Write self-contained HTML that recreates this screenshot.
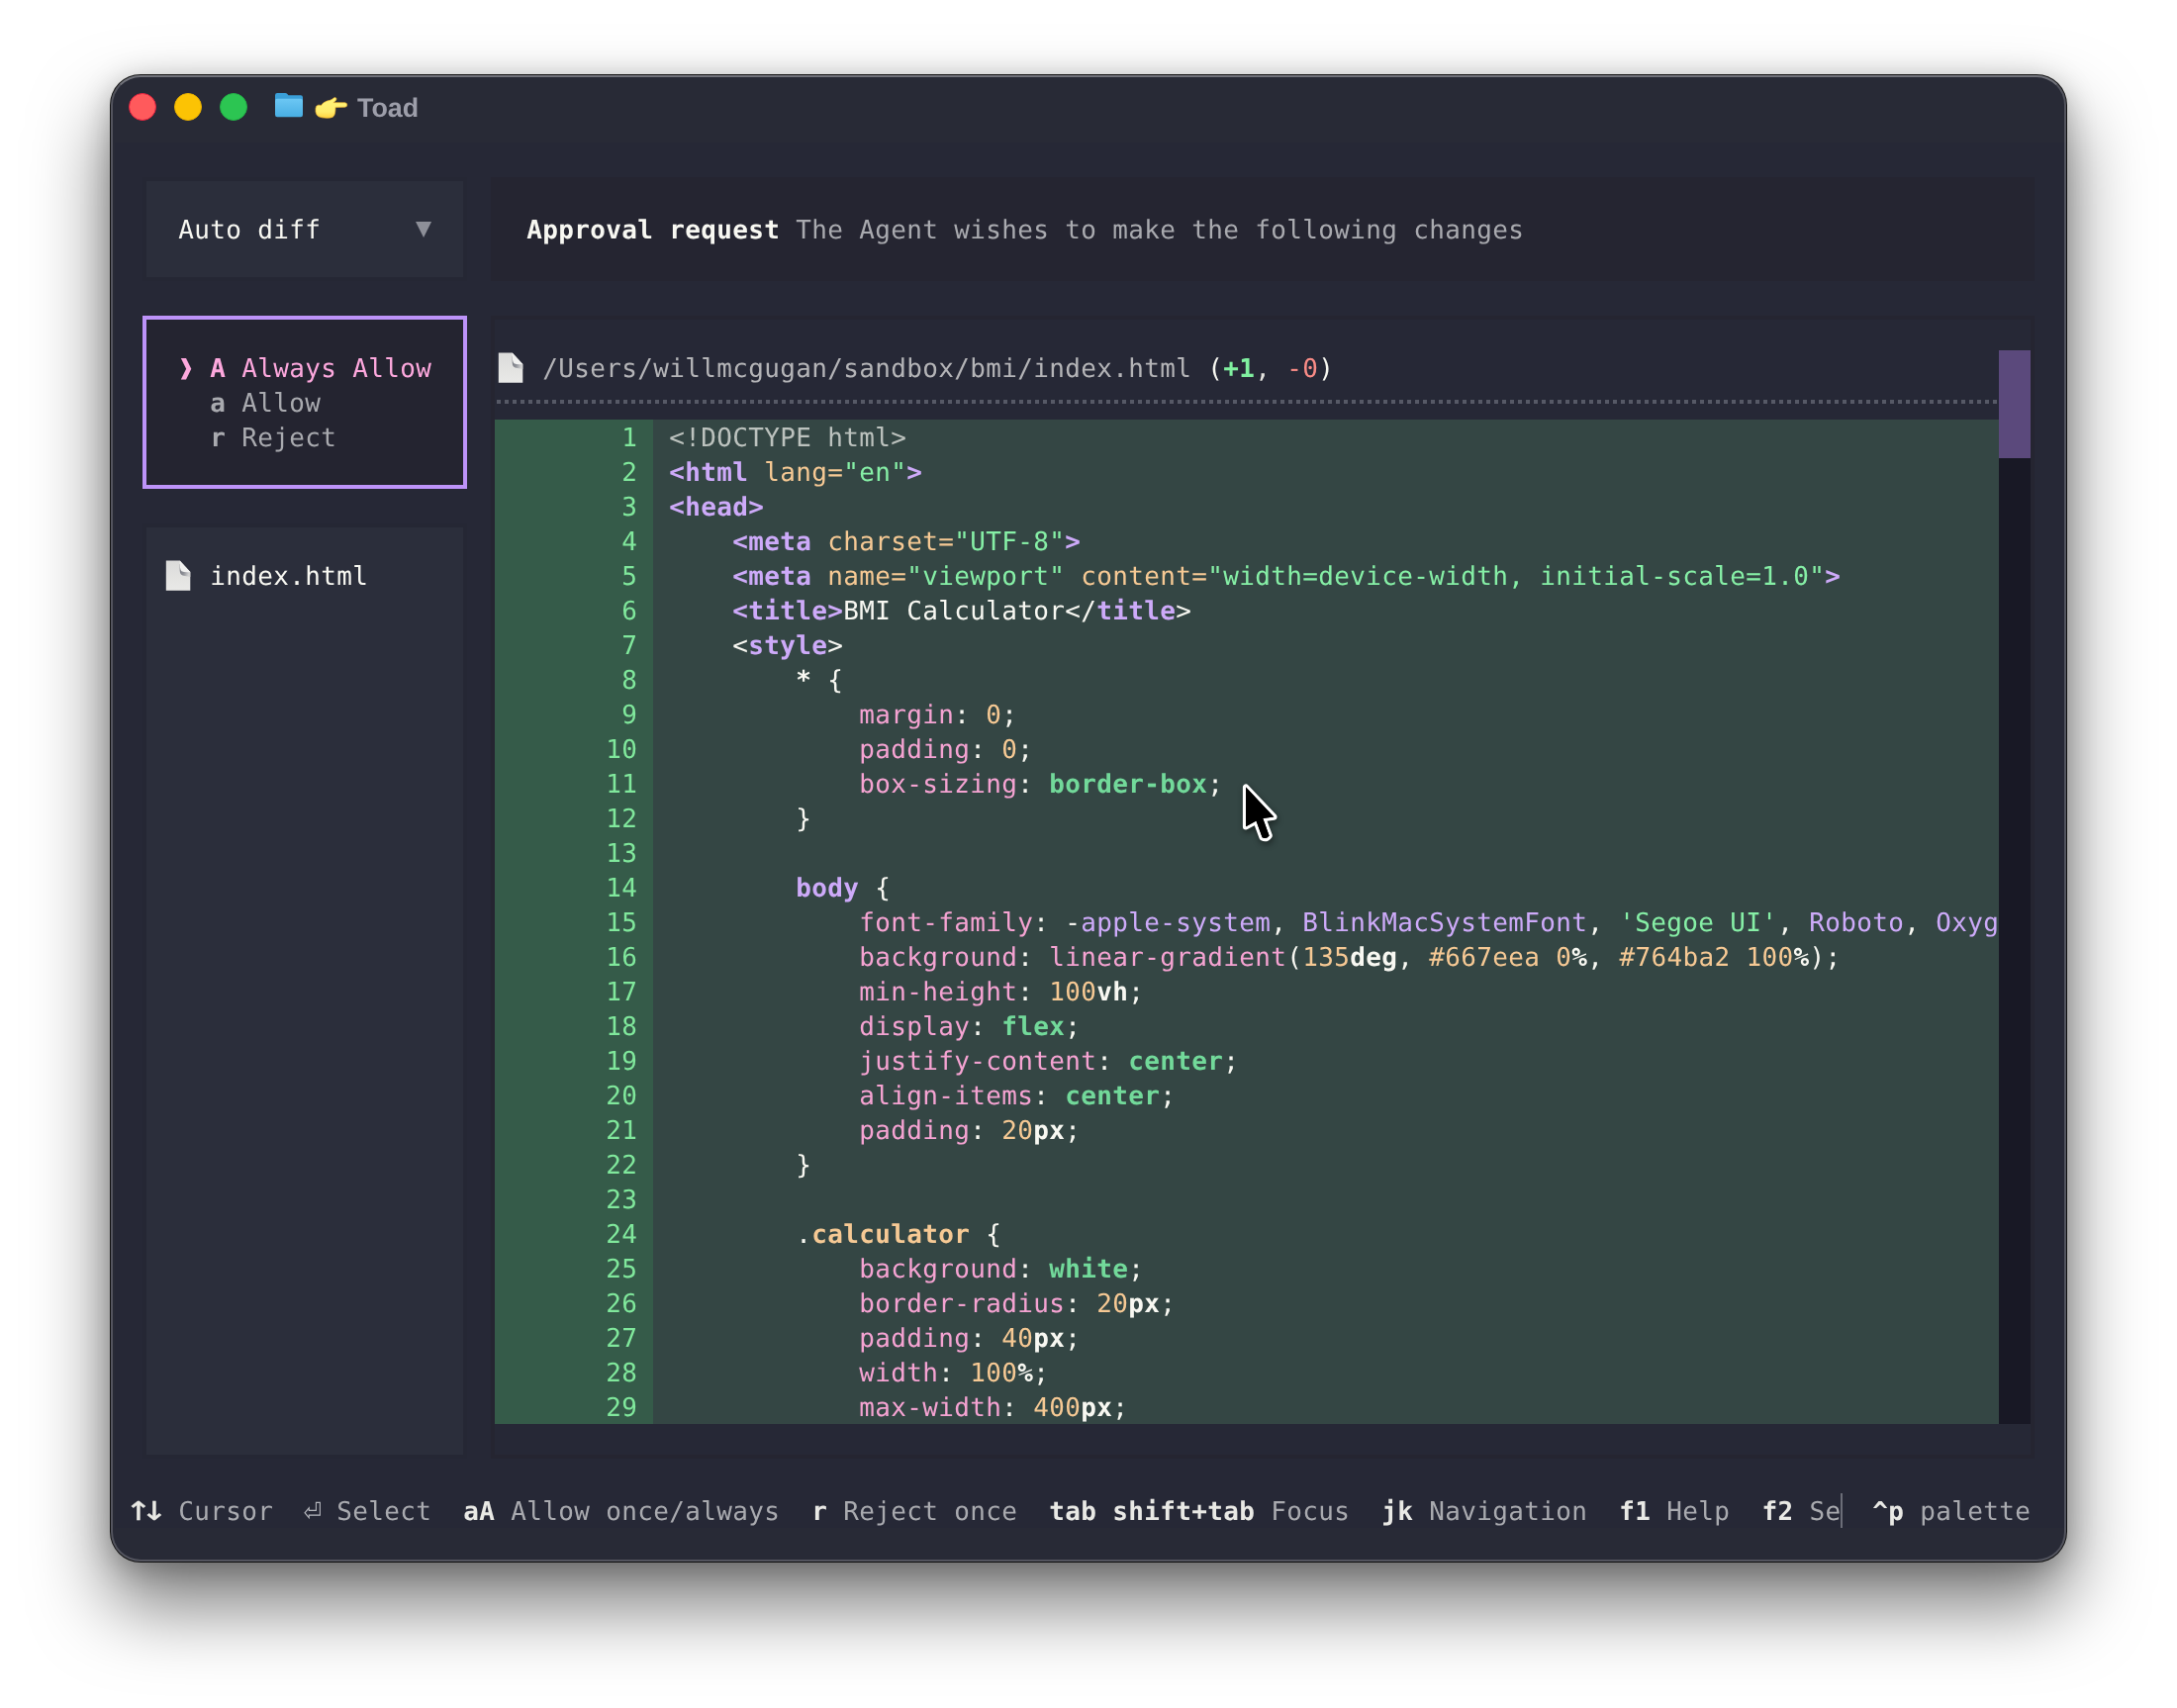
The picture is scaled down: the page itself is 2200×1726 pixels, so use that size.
<!DOCTYPE html>
<html lang="en"><head><meta charset="utf-8"><title>Toad</title>
<style>
html,body{margin:0;padding:0;background:#fff;}
body{width:2200px;height:1726px;position:relative;overflow:hidden;}
#win{position:absolute;left:112px;top:76px;width:1976px;height:1502px;border-radius:30px;background:#282a36;
 box-shadow:0 0 0 1px rgba(0,0,0,.9),0 42px 76px 4px rgba(0,0,0,.5),0 6px 30px rgba(0,0,0,.26);}
#win:after{content:"";position:absolute;inset:0;border-radius:30px;border:2px solid rgba(255,255,255,.2);border-top-color:rgba(255,255,255,.34);pointer-events:none;z-index:5}
#clip{position:absolute;left:0;top:0;width:1976px;height:1502px;border-radius:30px;overflow:hidden;}
#page{position:absolute;left:-112px;top:-76px;width:2200px;height:1726px;will-change:transform;}
.t,.s{text-rendering:geometricPrecision;}
.s{position:absolute;width:64px;height:35px;line-height:35px;text-align:center;transform-origin:50% 26.5px;white-space:pre;}
.t{position:absolute;height:35px;line-height:35px;white-space:pre;font-family:"DejaVu Sans Mono","Liberation Mono",monospace;font-size:26px;letter-spacing:0.347px;}
.tl{position:absolute;top:94px;width:28px;height:28px;border-radius:50%;box-sizing:border-box;}
#ttl{position:absolute;left:361px;top:92.6px;height:32px;line-height:32px;font-family:"Liberation Sans",sans-serif;font-weight:bold;font-size:26.9px;text-rendering:geometricPrecision;color:#9d9eaa;white-space:pre;}
</style></head><body>
<div id="win"><div id="clip"><div id="page">
<div class="tl" style="left:130px;background:#ff5a5c;border:1.5px solid #e5213f"></div>
<div class="tl" style="left:176px;background:#fcc304;border:1px solid #e9b000"></div>
<div class="tl" style="left:222px;background:#2cc552;border:1px solid #22b046"></div>
<svg style="position:absolute;left:277px;top:93px" width="30" height="26" viewBox="0 0 30 26">
<defs><linearGradient id="ff" x1="0" y1="0" x2="0" y2="1"><stop offset="0" stop-color="#6cc7f4"/><stop offset="1" stop-color="#48aee3"/></linearGradient></defs>
<path d="M1 3.2Q1 1 3.2 1H11.2Q12.6 1 13.4 2L14.4 3.2H26.8Q29 3.2 29 5.4V10H1Z" fill="#3a9fd8"/>
<path d="M1 9Q1 6.8 3.2 6.8H26.8Q29 6.8 29 9V23Q29 25.2 26.8 25.2H3.2Q1 25.2 1 23Z" fill="url(#ff)"/>
</svg>
<svg style="position:absolute;left:312px;top:92px" width="44" height="32" viewBox="0 0 44 32">
<defs><linearGradient id="hg" x1="0" y1="0" x2="0" y2="1"><stop offset="0" stop-color="#fff57a"/><stop offset=".7" stop-color="#ffec6c"/><stop offset="1" stop-color="#ffd23e"/></linearGradient></defs>
<path d="M7 17.5Q7.2 14.6 9.6 14.2Q11.4 14 12.6 14.6Q13.6 12.8 15.4 11.6Q18.4 9.8 21.6 9.3Q23.8 8.4 25.4 7Q26.6 6.2 27.5 6.9Q28.4 7.8 27.7 9Q26.6 10.6 24.9 11.7L36.6 11.8Q38.8 12 38.8 14Q38.8 16 36.6 16.2L27 16.4Q27 19.6 26.5 22.4Q26 25.2 24 26.4Q21.6 27.4 18 27.2Q13 27.2 10 25.8Q7.4 24.2 7 21Z" fill="url(#hg)" stroke="#f2b632" stroke-width=".7"/>
</svg>
<div id="ttl">Toad</div>
<div style="position:absolute;left:116px;top:144px;width:1972px;height:1400px;background:#262836;"></div>
<div style="position:absolute;left:144px;top:179px;width:328px;height:105px;background:#252734;"></div>
<div style="position:absolute;left:148px;top:183px;width:320px;height:97px;background:#2b2e3b;"></div>
<div style="position:absolute;left:144px;top:319px;width:328px;height:175px;background:#242430;box-sizing:border-box;border:4px solid #bd93f9;"></div>
<div style="position:absolute;left:144px;top:529px;width:328px;height:945px;background:#252734;"></div>
<div style="position:absolute;left:148px;top:533px;width:320px;height:937px;background:#2b2e3b;"></div>
<div style="position:absolute;left:496px;top:179px;width:1560px;height:105px;background:#252531;"></div>
<div style="position:absolute;left:496px;top:319px;width:1560px;height:1155px;background:#252531;"></div>
<div style="position:absolute;left:500px;top:323px;width:1552px;height:1147px;background:#262836;"></div>
<div style="position:absolute;left:502px;top:404px;width:1516px;height:4px;background:repeating-linear-gradient(90deg,#565966 0 4px,transparent 4px 8px)"></div>
<div style="position:absolute;left:500px;top:424px;width:160px;height:1015px;background:#355b49;"></div>
<div style="position:absolute;left:660px;top:424px;width:1360px;height:1015px;background:#344644;"></div>
<div style="position:absolute;left:2020px;top:354px;width:32px;height:1085px;background:#181825;"></div>
<div style="position:absolute;left:2020px;top:354px;width:32px;height:109.4px;background:#5b497c;"></div>
<div class="t" style="left:180.17px;top:215.5px"><span style="color:#f8f8f2;">Auto diff</span></div>
<div class="s" style="left:396px;top:215.5px;color:#8d8f98;font-family:&quot;DejaVu Sans Mono&quot;,monospace;font-size:26px;font-weight:normal;transform:translateY(-2px) scale(1.03,1.03)">▼</div>
<div class="t" style="left:180.17px;top:355.5px"><span style="color:#fda8dd;font-weight:bold;">❱</span><span style="color:#fda8dd;"> </span><span style="color:#fda8dd;font-weight:bold;">A</span><span style="color:#fda8dd;"> Always Allow</span></div>
<div class="t" style="left:212.17px;top:390.5px"><span style="color:#a9aaaf;font-weight:bold;">a</span><span style="color:#a9aaaf;"> Allow</span></div>
<div class="t" style="left:212.17px;top:425.5px"><span style="color:#a9aaaf;font-weight:bold;">r</span><span style="color:#a9aaaf;"> Reject</span></div>
<div class="t" style="left:212.17px;top:565.5px"><span style="color:#f8f8f2;">index.html</span></div>
<div class="t" style="left:532.17px;top:215.5px"><span style="color:#f8f8f2;font-weight:bold;">Approval request</span><span style="color:#a9aaaf;"> The Agent wishes to make the following changes</span></div>
<div class="t" style="left:548.17px;top:355.5px"><span style="color:#b4b4b7;">/Users/willmcgugan/sandbox/bmi/index.html </span><span style="color:#f8f8f2;">(</span><span style="color:#80f0a0;font-weight:bold;">+1</span><span style="color:#e4e4df;">,</span><span style="color:#f8f8f2;"> </span><span style="color:#fa8c87;">-0</span><span style="color:#f8f8f2;">)</span></div>
<div class="t" style="left:628.17px;top:425.5px"><span style="color:#80e89c;">1</span></div>
<div class="t" style="left:676.17px;top:425.5px"><span style="color:#bcc2be;">&lt;!DOCTYPE html&gt;</span></div>
<div class="t" style="left:628.17px;top:460.5px"><span style="color:#80e89c;">2</span></div>
<div class="t" style="left:676.17px;top:460.5px"><span style="color:#cdaaf9;font-weight:bold;">&lt;html</span><span style="color:#f8f8f2;"> </span><span style="color:#f6c994;">lang=</span><span style="color:#86efa6;">"en"</span><span style="color:#cdaaf9;font-weight:bold;">&gt;</span></div>
<div class="t" style="left:628.17px;top:495.5px"><span style="color:#80e89c;">3</span></div>
<div class="t" style="left:676.17px;top:495.5px"><span style="color:#cdaaf9;font-weight:bold;">&lt;head&gt;</span></div>
<div class="t" style="left:628.17px;top:530.5px"><span style="color:#80e89c;">4</span></div>
<div class="t" style="left:676.17px;top:530.5px"><span style="color:#f8f8f2;">    </span><span style="color:#cdaaf9;font-weight:bold;">&lt;meta</span><span style="color:#f8f8f2;"> </span><span style="color:#f6c994;">charset=</span><span style="color:#86efa6;">"UTF-8"</span><span style="color:#cdaaf9;font-weight:bold;">&gt;</span></div>
<div class="t" style="left:628.17px;top:565.5px"><span style="color:#80e89c;">5</span></div>
<div class="t" style="left:676.17px;top:565.5px"><span style="color:#f8f8f2;">    </span><span style="color:#cdaaf9;font-weight:bold;">&lt;meta</span><span style="color:#f8f8f2;"> </span><span style="color:#f6c994;">name=</span><span style="color:#86efa6;">"viewport"</span><span style="color:#f8f8f2;"> </span><span style="color:#f6c994;">content=</span><span style="color:#86efa6;">"width=device-width, initial-scale=1.0"</span><span style="color:#cdaaf9;font-weight:bold;">&gt;</span></div>
<div class="t" style="left:628.17px;top:600.5px"><span style="color:#80e89c;">6</span></div>
<div class="t" style="left:676.17px;top:600.5px"><span style="color:#f8f8f2;">    </span><span style="color:#cdaaf9;font-weight:bold;">&lt;title&gt;</span><span style="color:#f8f8f2;">BMI Calculator&lt;/</span><span style="color:#cdaaf9;font-weight:bold;">title</span><span style="color:#f8f8f2;">&gt;</span></div>
<div class="t" style="left:628.17px;top:635.5px"><span style="color:#80e89c;">7</span></div>
<div class="t" style="left:676.17px;top:635.5px"><span style="color:#f8f8f2;">    </span><span style="color:#f8f8f2;">&lt;</span><span style="color:#cdaaf9;font-weight:bold;">style</span><span style="color:#f8f8f2;">&gt;</span></div>
<div class="t" style="left:628.17px;top:670.5px"><span style="color:#80e89c;">8</span></div>
<div class="t" style="left:676.17px;top:670.5px"><span style="color:#f8f8f2;">        </span><span style="color:#f8f8f2;font-weight:bold;">*</span><span style="color:#f8f8f2;"> {</span></div>
<div class="t" style="left:628.17px;top:705.5px"><span style="color:#80e89c;">9</span></div>
<div class="t" style="left:676.17px;top:705.5px"><span style="color:#f8f8f2;">            </span><span style="color:#f5a3d2;">margin</span><span style="color:#f8f8f2;">:</span><span style="color:#f8f8f2;"> </span><span style="color:#f6c994;">0</span><span style="color:#f8f8f2;">;</span></div>
<div class="t" style="left:612.17px;top:740.5px"><span style="color:#80e89c;">10</span></div>
<div class="t" style="left:676.17px;top:740.5px"><span style="color:#f8f8f2;">            </span><span style="color:#f5a3d2;">padding</span><span style="color:#f8f8f2;">:</span><span style="color:#f8f8f2;"> </span><span style="color:#f6c994;">0</span><span style="color:#f8f8f2;">;</span></div>
<div class="t" style="left:612.17px;top:775.5px"><span style="color:#80e89c;">11</span></div>
<div class="t" style="left:676.17px;top:775.5px"><span style="color:#f8f8f2;">            </span><span style="color:#f5a3d2;">box-sizing</span><span style="color:#f8f8f2;">:</span><span style="color:#f8f8f2;"> </span><span style="color:#72d99a;font-weight:bold;">border-box</span><span style="color:#f8f8f2;">;</span></div>
<div class="t" style="left:612.17px;top:810.5px"><span style="color:#80e89c;">12</span></div>
<div class="t" style="left:676.17px;top:810.5px"><span style="color:#f8f8f2;">        }</span></div>
<div class="t" style="left:612.17px;top:845.5px"><span style="color:#80e89c;">13</span></div>
<div class="t" style="left:612.17px;top:880.5px"><span style="color:#80e89c;">14</span></div>
<div class="t" style="left:676.17px;top:880.5px"><span style="color:#f8f8f2;">        </span><span style="color:#cdaaf9;font-weight:bold;">body</span><span style="color:#f8f8f2;"> {</span></div>
<div class="t" style="left:612.17px;top:915.5px"><span style="color:#80e89c;">15</span></div>
<div class="t" style="left:676.17px;top:915.5px"><span style="color:#f8f8f2;">            </span><span style="color:#f5a3d2;">font-family</span><span style="color:#f8f8f2;">: -</span><span style="color:#cdaaf9;">apple-system</span><span style="color:#f8f8f2;">, </span><span style="color:#cdaaf9;">BlinkMacSystemFont</span><span style="color:#f8f8f2;">, </span><span style="color:#86efa6;">'Segoe UI'</span><span style="color:#f8f8f2;">, </span><span style="color:#cdaaf9;">Roboto</span><span style="color:#f8f8f2;">, </span><span style="color:#cdaaf9;">Oxyg</span></div>
<div class="t" style="left:612.17px;top:950.5px"><span style="color:#80e89c;">16</span></div>
<div class="t" style="left:676.17px;top:950.5px"><span style="color:#f8f8f2;">            </span><span style="color:#f5a3d2;">background</span><span style="color:#f8f8f2;">:</span><span style="color:#f8f8f2;"> </span><span style="color:#f5a3d2;">linear-gradient</span><span style="color:#f8f8f2;">(</span><span style="color:#f6c994;">135</span><span style="color:#f8f8f2;font-weight:bold;">deg</span><span style="color:#f8f8f2;">, </span><span style="color:#f6c994;">#667eea</span><span style="color:#f8f8f2;"> </span><span style="color:#f6c994;">0</span><span style="color:#f8f8f2;font-weight:bold;">%</span><span style="color:#f8f8f2;">, </span><span style="color:#f6c994;">#764ba2</span><span style="color:#f8f8f2;"> </span><span style="color:#f6c994;">100</span><span style="color:#f8f8f2;font-weight:bold;">%</span><span style="color:#f8f8f2;">)</span><span style="color:#f8f8f2;">;</span></div>
<div class="t" style="left:612.17px;top:985.5px"><span style="color:#80e89c;">17</span></div>
<div class="t" style="left:676.17px;top:985.5px"><span style="color:#f8f8f2;">            </span><span style="color:#f5a3d2;">min-height</span><span style="color:#f8f8f2;">:</span><span style="color:#f8f8f2;"> </span><span style="color:#f6c994;">100</span><span style="color:#f8f8f2;font-weight:bold;">vh</span><span style="color:#f8f8f2;">;</span></div>
<div class="t" style="left:612.17px;top:1020.5px"><span style="color:#80e89c;">18</span></div>
<div class="t" style="left:676.17px;top:1020.5px"><span style="color:#f8f8f2;">            </span><span style="color:#f5a3d2;">display</span><span style="color:#f8f8f2;">:</span><span style="color:#f8f8f2;"> </span><span style="color:#72d99a;font-weight:bold;">flex</span><span style="color:#f8f8f2;">;</span></div>
<div class="t" style="left:612.17px;top:1055.5px"><span style="color:#80e89c;">19</span></div>
<div class="t" style="left:676.17px;top:1055.5px"><span style="color:#f8f8f2;">            </span><span style="color:#f5a3d2;">justify-content</span><span style="color:#f8f8f2;">:</span><span style="color:#f8f8f2;"> </span><span style="color:#72d99a;font-weight:bold;">center</span><span style="color:#f8f8f2;">;</span></div>
<div class="t" style="left:612.17px;top:1090.5px"><span style="color:#80e89c;">20</span></div>
<div class="t" style="left:676.17px;top:1090.5px"><span style="color:#f8f8f2;">            </span><span style="color:#f5a3d2;">align-items</span><span style="color:#f8f8f2;">:</span><span style="color:#f8f8f2;"> </span><span style="color:#72d99a;font-weight:bold;">center</span><span style="color:#f8f8f2;">;</span></div>
<div class="t" style="left:612.17px;top:1125.5px"><span style="color:#80e89c;">21</span></div>
<div class="t" style="left:676.17px;top:1125.5px"><span style="color:#f8f8f2;">            </span><span style="color:#f5a3d2;">padding</span><span style="color:#f8f8f2;">:</span><span style="color:#f8f8f2;"> </span><span style="color:#f6c994;">20</span><span style="color:#f8f8f2;font-weight:bold;">px</span><span style="color:#f8f8f2;">;</span></div>
<div class="t" style="left:612.17px;top:1160.5px"><span style="color:#80e89c;">22</span></div>
<div class="t" style="left:676.17px;top:1160.5px"><span style="color:#f8f8f2;">        }</span></div>
<div class="t" style="left:612.17px;top:1195.5px"><span style="color:#80e89c;">23</span></div>
<div class="t" style="left:612.17px;top:1230.5px"><span style="color:#80e89c;">24</span></div>
<div class="t" style="left:676.17px;top:1230.5px"><span style="color:#f8f8f2;">        .</span><span style="color:#f6c994;font-weight:bold;">calculator</span><span style="color:#f8f8f2;"> {</span></div>
<div class="t" style="left:612.17px;top:1265.5px"><span style="color:#80e89c;">25</span></div>
<div class="t" style="left:676.17px;top:1265.5px"><span style="color:#f8f8f2;">            </span><span style="color:#f5a3d2;">background</span><span style="color:#f8f8f2;">:</span><span style="color:#f8f8f2;"> </span><span style="color:#72d99a;font-weight:bold;">white</span><span style="color:#f8f8f2;">;</span></div>
<div class="t" style="left:612.17px;top:1300.5px"><span style="color:#80e89c;">26</span></div>
<div class="t" style="left:676.17px;top:1300.5px"><span style="color:#f8f8f2;">            </span><span style="color:#f5a3d2;">border-radius</span><span style="color:#f8f8f2;">:</span><span style="color:#f8f8f2;"> </span><span style="color:#f6c994;">20</span><span style="color:#f8f8f2;font-weight:bold;">px</span><span style="color:#f8f8f2;">;</span></div>
<div class="t" style="left:612.17px;top:1335.5px"><span style="color:#80e89c;">27</span></div>
<div class="t" style="left:676.17px;top:1335.5px"><span style="color:#f8f8f2;">            </span><span style="color:#f5a3d2;">padding</span><span style="color:#f8f8f2;">:</span><span style="color:#f8f8f2;"> </span><span style="color:#f6c994;">40</span><span style="color:#f8f8f2;font-weight:bold;">px</span><span style="color:#f8f8f2;">;</span></div>
<div class="t" style="left:612.17px;top:1370.5px"><span style="color:#80e89c;">28</span></div>
<div class="t" style="left:676.17px;top:1370.5px"><span style="color:#f8f8f2;">            </span><span style="color:#f5a3d2;">width</span><span style="color:#f8f8f2;">:</span><span style="color:#f8f8f2;"> </span><span style="color:#f6c994;">100</span><span style="color:#f8f8f2;font-weight:bold;">%</span><span style="color:#f8f8f2;">;</span></div>
<div class="t" style="left:612.17px;top:1405.5px"><span style="color:#80e89c;">29</span></div>
<div class="t" style="left:676.17px;top:1405.5px"><span style="color:#f8f8f2;">            </span><span style="color:#f5a3d2;">max-width</span><span style="color:#f8f8f2;">:</span><span style="color:#f8f8f2;"> </span><span style="color:#f6c994;">400</span><span style="color:#f8f8f2;font-weight:bold;">px</span><span style="color:#f8f8f2;">;</span></div>
<div class="t" style="left:132.17px;top:1510.5px"><span style="color:#e9e9e5;font-weight:bold;">  </span><span style="color:#a9aaaf;"> Cursor  </span><span style="color:#a9aaaf;"> </span><span style="color:#a9aaaf;"> Select  </span><span style="color:#e9e9e5;font-weight:bold;">aA</span><span style="color:#a9aaaf;"> Allow once/always  </span><span style="color:#e9e9e5;font-weight:bold;">r</span><span style="color:#a9aaaf;"> Reject once  </span><span style="color:#e9e9e5;font-weight:bold;">tab shift+tab</span><span style="color:#a9aaaf;"> Focus  </span><span style="color:#e9e9e5;font-weight:bold;">jk</span><span style="color:#a9aaaf;"> Navigation  </span><span style="color:#e9e9e5;font-weight:bold;">f1</span><span style="color:#a9aaaf;"> Help  </span><span style="color:#e9e9e5;font-weight:bold;">f2</span><span style="color:#a9aaaf;"> Se</span></div>
<div class="s" style="left:108px;top:1510.5px;color:#e9e9e4;font-family:&quot;DejaVu Sans&quot;,sans-serif;font-size:26px;font-weight:normal;-webkit-text-stroke:0.45px #e9e9e4;transform:translateY(0px) scale(1.25,1.0)">↑</div>
<div class="s" style="left:124px;top:1510.5px;color:#e9e9e4;font-family:&quot;DejaVu Sans&quot;,sans-serif;font-size:26px;font-weight:normal;-webkit-text-stroke:0.45px #e9e9e4;transform:translateY(0px) scale(1.25,1.0)">↓</div>
<div class="s" style="left:284px;top:1510.5px;color:#b4b6bc;font-family:&quot;DejaVu Sans&quot;,sans-serif;font-size:22px;font-weight:normal;transform:translateY(2.2px) scale(1.0,1.2)">⏎</div>
<div style="position:absolute;left:1860px;top:1509px;width:2px;height:35px;background:#6b6d78;"></div>
<div class="t" style="left:1892.17px;top:1510.5px"><span style="color:#e9e9e5;font-weight:bold;">^p</span><span style="color:#a9aaaf;"> palette</span></div>
<svg style="position:absolute;left:167px;top:566px" width="26" height="32" viewBox="0 0 26 32"><defs><linearGradient id="pg1" x1="0" y1="0" x2="0" y2="1"><stop offset="0" stop-color="#dbdbda"/><stop offset="1" stop-color="#e9e9e7"/></linearGradient><linearGradient id="ps1" x1="0" y1="0" x2="1" y2=".35"><stop offset="0" stop-color="#6d7079"/><stop offset=".55" stop-color="#8f9198"/><stop offset="1" stop-color="#d0d0d0"/></linearGradient></defs><path d="M0.8 0.5H14.7L25.3 12V30.8H0.8Z" fill="url(#pg1)"/><path d="M14.7 4V10.6Q14.7 15.8 19.8 16L25.3 16.9V12Z" fill="url(#ps1)"/><path d="M14.7 0.5L25.3 12Q19.4 12.6 16.4 11.2Q14.5 10 14.7 0.5Z" fill="#f1f1f0"/></svg>
<svg style="position:absolute;left:503px;top:356px" width="26" height="32" viewBox="0 0 26 32"><defs><linearGradient id="pg2" x1="0" y1="0" x2="0" y2="1"><stop offset="0" stop-color="#dbdbda"/><stop offset="1" stop-color="#e9e9e7"/></linearGradient><linearGradient id="ps2" x1="0" y1="0" x2="1" y2=".35"><stop offset="0" stop-color="#6d7079"/><stop offset=".55" stop-color="#8f9198"/><stop offset="1" stop-color="#d0d0d0"/></linearGradient></defs><path d="M0.8 0.5H14.7L25.3 12V30.8H0.8Z" fill="url(#pg2)"/><path d="M14.7 4V10.6Q14.7 15.8 19.8 16L25.3 16.9V12Z" fill="url(#ps2)"/><path d="M14.7 0.5L25.3 12Q19.4 12.6 16.4 11.2Q14.5 10 14.7 0.5Z" fill="#f1f1f0"/></svg>
<svg style="position:absolute;left:1240px;top:779.2px;overflow:visible" width="64" height="84" viewBox="1240 780 64 84"><path d="M1259.1 796.6L1259.1 836.2L1269.5 830.6L1275.6 847.2Q1279.4 849.4 1282.6 845.4L1276.2 828L1287.3 826.5Z" fill="#000" stroke="#fff" stroke-width="6.4" stroke-linejoin="round" paint-order="stroke" style="filter:drop-shadow(1px 3px 3px rgba(0,0,0,.45))"/><path d="M1259.1 796.6L1259.1 836.2L1269.5 830.6L1275.6 847.2Q1279.4 849.4 1282.6 845.4L1276.2 828L1287.3 826.5Z" fill="#000"/></svg>
</div></div></div>
</body></html>
